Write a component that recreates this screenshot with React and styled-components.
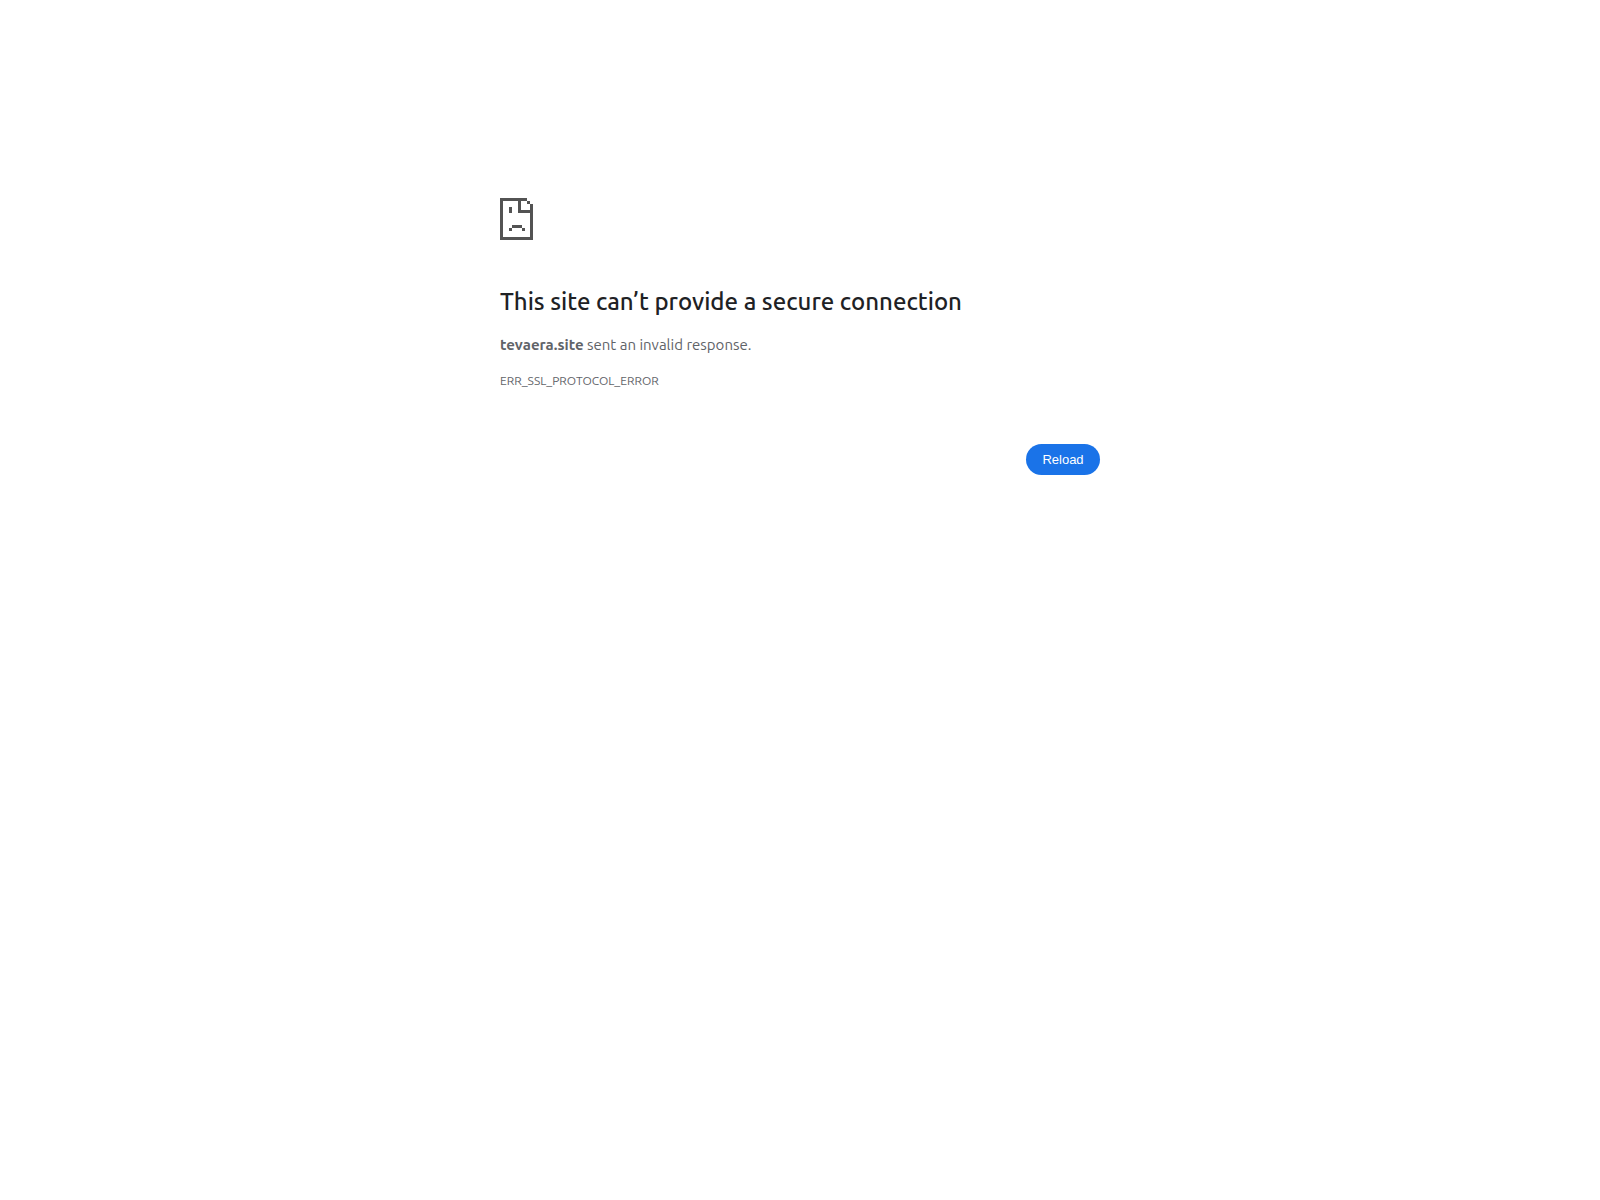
import React from 'react'
import styled, { createGlobalStyle } from 'styled-components'

const GlobalStyle = createGlobalStyle`
  body {
    margin: 0;
    background: #fff;
    color: #5f6368;
    font-family: Ubuntu, "Noto Sans", sans-serif;
    font-size: 15px;
    line-height: 24px;
  }
`

const Container = styled.main`
  box-sizing: border-box;
  max-width: 600px;
  margin: 0 auto;
  padding-top: 198px;
`

const Icon = styled.svg`
  display: block;
  width: 33px;
  height: 42px;
  margin-bottom: 47px;
  fill: #535353;
`

const Title = styled.h1`
  margin: 0 0 16px;
  color: #202124;
  font-size: 24px;
  font-weight: 500;
  line-height: 30px;
`

const Message = styled.p`
  margin: 0 0 12px;
`

const ErrorCode = styled.div`
  font-size: 12px;
`

const Buttons = styled.div`
  display: flex;
  justify-content: flex-end;
  margin-top: 51px;
`

const ReloadButton = styled.button`
  min-width: 74px;
  padding: 8px 16px;
  border: 0;
  border-radius: 16px;
  background: #1a73e8;
  color: #fff;
  font-family: "Liberation Sans", Arial, sans-serif;
  font-size: 13px;
  line-height: 15px;
  cursor: pointer;
`

const SadPage = () => (
  <Icon viewBox="0 0 33 42" shapeRendering="crispEdges" aria-hidden="true">
    {/* page outline and folded corner */}
    <path d="M0 0h27v3h-6v9h9V6h3v36H0zM3 3v36h27V15H18V3z" fillRule="evenodd" />
    <path d="M27 3h3v3h-3z" />
    {/* eye and mouth */}
    <path d="M9 9h3v6H9zM12 27h10v3H12zM9 30h3v3H9zM22 30h3v3h-3z" />
  </Icon>
)

const App = () => (
  <>
    <GlobalStyle />
    <Container>
      <SadPage />
      <Title>This site can’t provide a secure connection</Title>
      <Message>
        <strong>tevaera.site</strong> sent an invalid response.
      </Message>
      <ErrorCode>ERR_SSL_PROTOCOL_ERROR</ErrorCode>
      <Buttons>
        <ReloadButton type="button" onClick={() => window.location.reload()}>
          Reload
        </ReloadButton>
      </Buttons>
    </Container>
  </>
)

export default App
